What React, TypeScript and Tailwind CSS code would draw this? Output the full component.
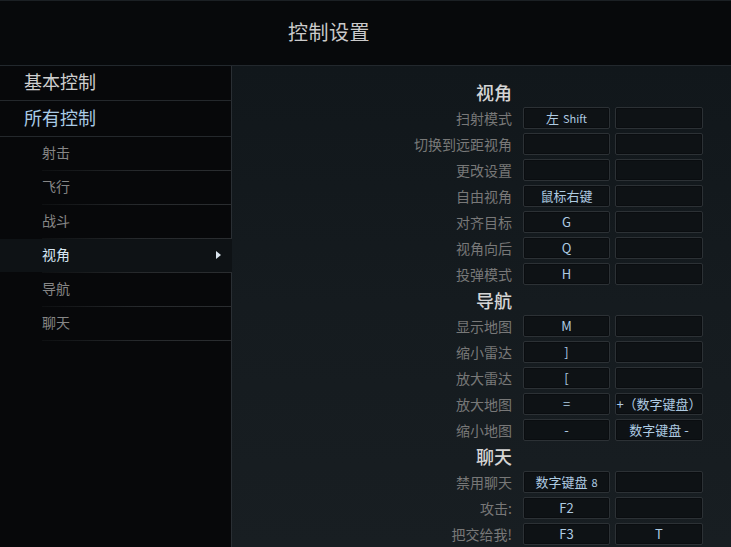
import React from 'react';

type Row =
  | { kind: 'head'; label: string }
  | { kind: 'bind'; label: string; a?: React.ReactNode; b?: React.ReactNode };

const rows: Row[] = [
  { kind: 'head', label: '视角' },
  { kind: 'bind', label: '扫射模式', a: <>左<span className="ml-[4px] text-[11px]">Shift</span></> },
  { kind: 'bind', label: '切换到远距视角' },
  { kind: 'bind', label: '更改设置' },
  { kind: 'bind', label: '自由视角', a: '鼠标右键' },
  { kind: 'bind', label: '对齐目标', a: 'G' },
  { kind: 'bind', label: '视角向后', a: 'Q' },
  { kind: 'bind', label: '投弹模式', a: 'H' },
  { kind: 'head', label: '导航' },
  { kind: 'bind', label: '显示地图', a: 'M' },
  { kind: 'bind', label: '缩小雷达', a: ']' },
  { kind: 'bind', label: '放大雷达', a: '[' },
  { kind: 'bind', label: '放大地图', a: '=', b: '+（数字键盘）' },
  { kind: 'bind', label: '缩小地图', a: '-', b: '数字键盘 -' },
  { kind: 'head', label: '聊天' },
  { kind: 'bind', label: '禁用聊天', a: <>数字键盘<span className="ml-[4px] text-[11px]">8</span></> },
  { kind: 'bind', label: '攻击:', a: 'F2' },
  { kind: 'bind', label: '把交给我!', a: 'F3', b: 'T' },
];

const subItems = ['射击', '飞行', '战斗', '视角', '导航', '聊天'];

const KeyBox: React.FC<{ w: string; children?: React.ReactNode }> = ({ w, children }) => (
  <div
    className={`${w} h-[22px] flex items-center justify-center rounded-[2px] border border-[#2c3135] bg-[#0e1215] shadow-[inset_0_0_0_1px_#0a0d10] text-[13px] text-[#aecbe2] whitespace-nowrap`}
  >
    {children}
  </div>
);

export default function App() {
  return (
    <div
      className="w-[731px] h-[547px] overflow-hidden bg-[#06080a] flex flex-col"
      style={{ fontFamily: '"Noto Sans CJK SC", "Noto Sans", sans-serif' }}
    >
      {/* header */}
      <div className="h-[66px] shrink-0 border-t border-[#1b2024] border-b border-b-[#22282d] bg-[#07090b] flex items-center pl-[288px]">
        <span className="text-[20px] text-[#cacaca] tracking-[0.5px] -mt-[2px]">控制设置</span>
      </div>

      <div className="flex flex-1 min-h-0">
        {/* sidebar */}
        <div className="w-[232px] shrink-0 flex flex-col bg-[#07080a]">
          <div className="h-[35px] flex items-center pl-[24px] border-r border-[#2a2f34] border-b border-b-[#24282c]">
            <span className="text-[18px] text-[#cfcfcf] -mt-[3px]">基本控制</span>
          </div>
          <div className="h-[36px] flex items-center pl-[24px] border-r border-[#2a2f34] border-b border-b-[#24282c]">
            <span className="text-[18px] text-[#a9cbe6] -mt-[3px]">所有控制</span>
          </div>
          {subItems.map((item) => {
            const active = item === '视角';
            return (
              <div key={item} className="flex flex-col">
                <div
                  className={`h-[33px] flex items-center pl-[42px] pr-[10px] ${
                    active ? 'bg-[#0e1215]' : 'border-r border-[#2a2f34]'
                  }`}
                >
                  <span className={`text-[14px] -mt-[3px] ${active ? 'text-[#d6e6f3]' : 'text-[#868686]'}`}>{item}</span>
                  {active && (
                    <span className="ml-auto mr-[1px] -mt-[1px] w-0 h-0 border-y-[4px] border-y-transparent border-l-[5px] border-l-[#dbe5ee]" />
                  )}
                </div>
                <div className="flex h-px">
                  <div className="w-[42px]" />
                  <div className="flex-1 bg-gradient-to-r from-[#0e1012] via-[#26292c] to-[#2a2d30]" />
                </div>
              </div>
            );
          })}
          <div className="flex-1 border-r border-[#2a2f34]" />
        </div>

        {/* bindings panel */}
        <div className="flex-1 bg-gradient-to-b from-[#11171b] via-[#151b1f] to-[#181e22] pt-[13px]">
          {rows.map((r, i) =>
            r.kind === 'head' ? (
              <div key={i} className="h-[26px] flex items-center">
                <div className="w-[280px] text-right text-[18px] font-medium text-[#d5d5d5] leading-none -mt-[1px]">{r.label}</div>
              </div>
            ) : (
              <div key={i} className="h-[26px] flex items-center">
                <div className="w-[280px] text-right text-[14px] text-[#787878] leading-none whitespace-nowrap">{r.label}</div>
                <div className="ml-[11px]">
                  <KeyBox w="w-[87px]">{r.a}</KeyBox>
                </div>
                <div className="ml-[5px]">
                  <KeyBox w="w-[88px]">{r.b}</KeyBox>
                </div>
              </div>
            )
          )}
        </div>
      </div>
    </div>
  );
}
